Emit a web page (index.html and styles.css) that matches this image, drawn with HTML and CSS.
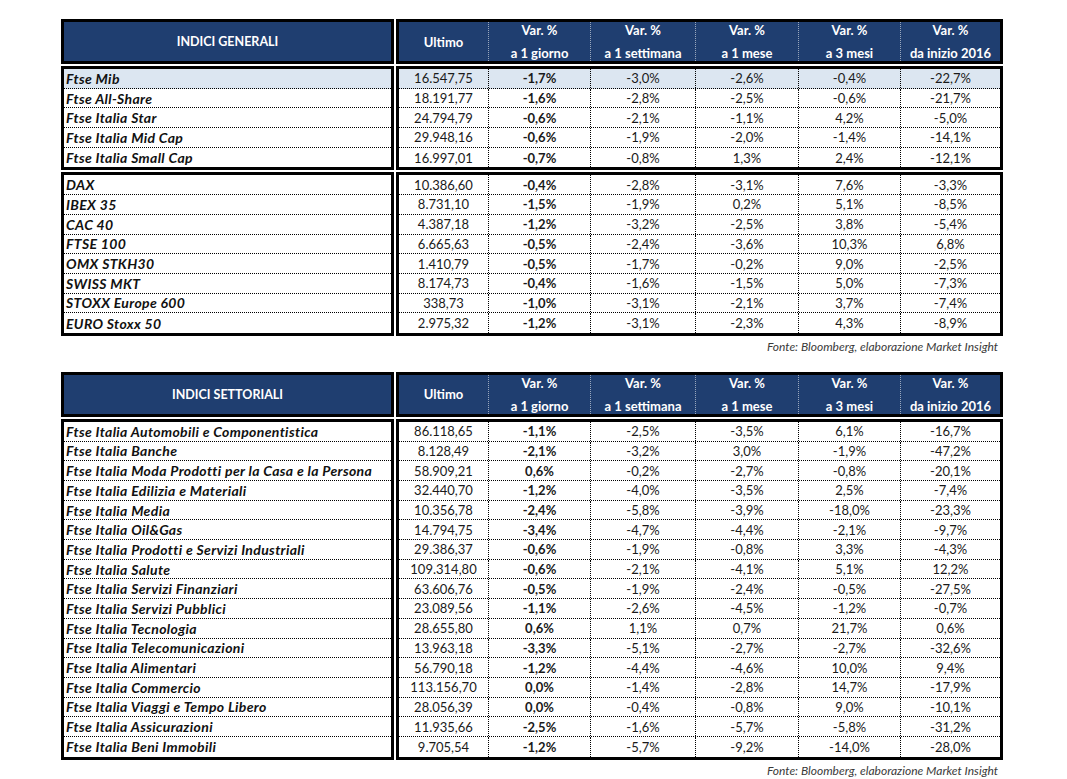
FILE: index.html
```html
<!DOCTYPE html>
<html lang="it">
<head>
<meta charset="utf-8">
<title>Indici</title>
<link rel="stylesheet" href="styles.css">
</head>
<body>
<div class="page">

<section class="tbl">
  <div class="hdr">
    <div class="box hname">INDICI GENERALI</div>
    <div class="box hdata cols">
      <div class="hc">Ultimo</div>
      <div class="hc two"><span>Var. %</span><span>a 1 giorno</span></div>
      <div class="hc two"><span>Var. %</span><span>a 1 settimana</span></div>
      <div class="hc two"><span>Var. %</span><span>a 1 mese</span></div>
      <div class="hc two"><span>Var. %</span><span>a 3 mesi</span></div>
      <div class="hc two"><span>Var. %</span><span>da inizio 2016</span></div>
    </div>
  </div>
  <div class="grp">
    <div class="box names">
      <div class="row hl">Ftse Mib</div>
      <div class="row">Ftse All-Share</div>
      <div class="row">Ftse Italia Star</div>
      <div class="row">Ftse Italia Mid Cap</div>
      <div class="row">Ftse Italia Small Cap</div>
    </div>
    <div class="box data">
      <div class="row cols hl"><span>16.547,75</span><b>-1,7%</b><span>-3,0%</span><span>-2,6%</span><span>-0,4%</span><span>-22,7%</span></div>
      <div class="row cols"><span>18.191,77</span><b>-1,6%</b><span>-2,8%</span><span>-2,5%</span><span>-0,6%</span><span>-21,7%</span></div>
      <div class="row cols"><span>24.794,79</span><b>-0,6%</b><span>-2,1%</span><span>-1,1%</span><span>4,2%</span><span>-5,0%</span></div>
      <div class="row cols"><span>29.948,16</span><b>-0,6%</b><span>-1,9%</span><span>-2,0%</span><span>-1,4%</span><span>-14,1%</span></div>
      <div class="row cols"><span>16.997,01</span><b>-0,7%</b><span>-0,8%</span><span>1,3%</span><span>2,4%</span><span>-12,1%</span></div>
    </div>
  </div>
  <div class="grp">
    <div class="box names">
      <div class="row">DAX</div>
      <div class="row">IBEX 35</div>
      <div class="row">CAC 40</div>
      <div class="row">FTSE 100</div>
      <div class="row">OMX STKH30</div>
      <div class="row">SWISS MKT</div>
      <div class="row">STOXX Europe 600</div>
      <div class="row">EURO Stoxx 50</div>
    </div>
    <div class="box data">
      <div class="row cols"><span>10.386,60</span><b>-0,4%</b><span>-2,8%</span><span>-3,1%</span><span>7,6%</span><span>-3,3%</span></div>
      <div class="row cols"><span>8.731,10</span><b>-1,5%</b><span>-1,9%</span><span>0,2%</span><span>5,1%</span><span>-8,5%</span></div>
      <div class="row cols"><span>4.387,18</span><b>-1,2%</b><span>-3,2%</span><span>-2,5%</span><span>3,8%</span><span>-5,4%</span></div>
      <div class="row cols"><span>6.665,63</span><b>-0,5%</b><span>-2,4%</span><span>-3,6%</span><span>10,3%</span><span>6,8%</span></div>
      <div class="row cols"><span>1.410,79</span><b>-0,5%</b><span>-1,7%</span><span>-0,2%</span><span>9,0%</span><span>-2,5%</span></div>
      <div class="row cols"><span>8.174,73</span><b>-0,4%</b><span>-1,6%</span><span>-1,5%</span><span>5,0%</span><span>-7,3%</span></div>
      <div class="row cols"><span>338,73</span><b>-1,0%</b><span>-3,1%</span><span>-2,1%</span><span>3,7%</span><span>-7,4%</span></div>
      <div class="row cols"><span>2.975,32</span><b>-1,2%</b><span>-3,1%</span><span>-2,3%</span><span>4,3%</span><span>-8,9%</span></div>
    </div>
  </div>
  <p class="src">Fonte: Bloomberg, elaborazione Market Insight</p>
</section>

<section class="tbl">
  <div class="hdr">
    <div class="box hname">INDICI SETTORIALI</div>
    <div class="box hdata cols">
      <div class="hc">Ultimo</div>
      <div class="hc two"><span>Var. %</span><span>a 1 giorno</span></div>
      <div class="hc two"><span>Var. %</span><span>a 1 settimana</span></div>
      <div class="hc two"><span>Var. %</span><span>a 1 mese</span></div>
      <div class="hc two"><span>Var. %</span><span>a 3 mesi</span></div>
      <div class="hc two"><span>Var. %</span><span>da inizio 2016</span></div>
    </div>
  </div>
  <div class="grp">
    <div class="box names">
      <div class="row">Ftse Italia Automobili e Componentistica</div>
      <div class="row">Ftse Italia Banche</div>
      <div class="row">Ftse Italia Moda Prodotti per la Casa e la Persona</div>
      <div class="row">Ftse Italia Edilizia e Materiali</div>
      <div class="row">Ftse Italia Media</div>
      <div class="row">Ftse Italia Oil&amp;Gas</div>
      <div class="row">Ftse Italia Prodotti e Servizi Industriali</div>
      <div class="row">Ftse Italia Salute</div>
      <div class="row">Ftse Italia Servizi Finanziari</div>
      <div class="row">Ftse Italia Servizi Pubblici</div>
      <div class="row">Ftse Italia Tecnologia</div>
      <div class="row">Ftse Italia Telecomunicazioni</div>
      <div class="row">Ftse Italia Alimentari</div>
      <div class="row">Ftse Italia Commercio</div>
      <div class="row">Ftse Italia Viaggi e Tempo Libero</div>
      <div class="row">Ftse Italia Assicurazioni</div>
      <div class="row">Ftse Italia Beni Immobili</div>
    </div>
    <div class="box data">
      <div class="row cols"><span>86.118,65</span><b>-1,1%</b><span>-2,5%</span><span>-3,5%</span><span>6,1%</span><span>-16,7%</span></div>
      <div class="row cols"><span>8.128,49</span><b>-2,1%</b><span>-3,2%</span><span>3,0%</span><span>-1,9%</span><span>-47,2%</span></div>
      <div class="row cols"><span>58.909,21</span><b>0,6%</b><span>-0,2%</span><span>-2,7%</span><span>-0,8%</span><span>-20,1%</span></div>
      <div class="row cols"><span>32.440,70</span><b>-1,2%</b><span>-4,0%</span><span>-3,5%</span><span>2,5%</span><span>-7,4%</span></div>
      <div class="row cols"><span>10.356,78</span><b>-2,4%</b><span>-5,8%</span><span>-3,9%</span><span>-18,0%</span><span>-23,3%</span></div>
      <div class="row cols"><span>14.794,75</span><b>-3,4%</b><span>-4,7%</span><span>-4,4%</span><span>-2,1%</span><span>-9,7%</span></div>
      <div class="row cols"><span>29.386,37</span><b>-0,6%</b><span>-1,9%</span><span>-0,8%</span><span>3,3%</span><span>-4,3%</span></div>
      <div class="row cols"><span>109.314,80</span><b>-0,6%</b><span>-2,1%</span><span>-4,1%</span><span>5,1%</span><span>12,2%</span></div>
      <div class="row cols"><span>63.606,76</span><b>-0,5%</b><span>-1,9%</span><span>-2,4%</span><span>-0,5%</span><span>-27,5%</span></div>
      <div class="row cols"><span>23.089,56</span><b>-1,1%</b><span>-2,6%</span><span>-4,5%</span><span>-1,2%</span><span>-0,7%</span></div>
      <div class="row cols"><span>28.655,80</span><b>0,6%</b><span>1,1%</span><span>0,7%</span><span>21,7%</span><span>0,6%</span></div>
      <div class="row cols"><span>13.963,18</span><b>-3,3%</b><span>-5,1%</span><span>-2,7%</span><span>-2,7%</span><span>-32,6%</span></div>
      <div class="row cols"><span>56.790,18</span><b>-1,2%</b><span>-4,4%</span><span>-4,6%</span><span>10,0%</span><span>9,4%</span></div>
      <div class="row cols"><span>113.156,70</span><b>0,0%</b><span>-1,4%</span><span>-2,8%</span><span>14,7%</span><span>-17,9%</span></div>
      <div class="row cols"><span>28.056,39</span><b>0,0%</b><span>-0,4%</span><span>-0,8%</span><span>9,0%</span><span>-10,1%</span></div>
      <div class="row cols"><span>11.935,66</span><b>-2,5%</b><span>-1,6%</span><span>-5,7%</span><span>-5,8%</span><span>-31,2%</span></div>
      <div class="row cols"><span>9.705,54</span><b>-1,2%</b><span>-5,7%</span><span>-9,2%</span><span>-14,0%</span><span>-28,0%</span></div>
    </div>
  </div>
  <p class="src">Fonte: Bloomberg, elaborazione Market Insight</p>
</section>

</div>
</body>
</html>
```

FILE: styles.css
```css
* { box-sizing: border-box; }

html, body {
  margin: 0;
  padding: 0;
  background: #ffffff;
}

body {
  font-family: Lato, "Liberation Sans", sans-serif;
  font-size: 13px;
  color: #1a1a1a;
}

.page {
  padding: 19px 0 0 61px;
}

.tbl {
  width: 942px;
}

.hdr,
.grp {
  display: flex;
  gap: 2px;
  margin-bottom: 2px;
}

.box {
  border: 3px solid #000;
}

.hname,
.names {
  width: 333px;
}

.hdata,
.data {
  width: 607px;
}

.cols {
  display: grid;
  grid-template-columns: 90px 102px 105px 103px 102px 99px;
}

/* header */
.hdr .box {
  height: 45px;
  background: #1f3e70;
  color: #ffffff;
  font-weight: 700;
}

.hname {
  display: flex;
  align-items: center;
  justify-content: center;
  font-size: 12.5px;
}

.hc {
  display: flex;
  align-items: center;
  justify-content: center;
  font-size: 13px;
  border-right: 1px dotted rgba(255, 255, 255, 0.55);
}

.hc:last-child {
  border-right: none;
}

.hc.two {
  flex-direction: column;
  gap: 7px;
}

.hc.two span {
  line-height: 16px;
}

/* rows */
.row {
  height: 19.7px;
  border-bottom: 1px dotted #000;
}

.row:last-child {
  border-bottom: none;
}

.names .row {
  display: flex;
  align-items: center;
  padding-left: 2px;
  font-size: 14px;
  letter-spacing: 0.35px;
  font-weight: 700;
  font-style: italic;
  color: #111;
  white-space: nowrap;
}

.data .row > * {
  display: flex;
  align-items: center;
  justify-content: center;
  border-right: 1px dotted #000;
  font-weight: 400;
}

.data .row > b {
  font-weight: 700;
}

.data .row > *:last-child {
  border-right: none;
}

.hl {
  background: #dce6f1;
}

.src {
  margin: -2px 0 0;
  height: 22px;
  line-height: 22px;
  padding-right: 5px;
  text-align: right;
  font-style: italic;
  font-size: 12px;
  color: #3a3a3a;
}

.tbl + .tbl {
  margin-top: 14px;
}
```
